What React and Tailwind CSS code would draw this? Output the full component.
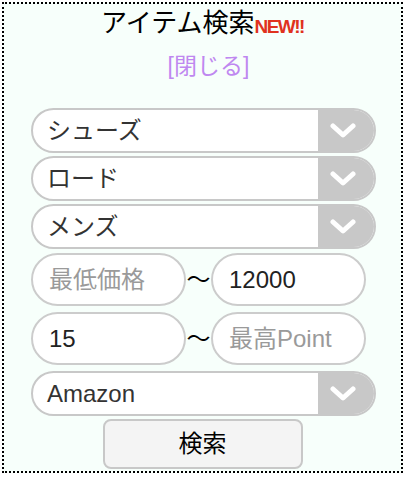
import React from "react";

const font = { fontFamily: '"Liberation Sans", "Noto Sans CJK JP", sans-serif' };

function Chevron() {
  return (
    <svg width="26" height="18" viewBox="0 0 26 18">
      <path d="M3 4 L13 13 L23 4" fill="none" stroke="#ffffff" strokeWidth="5" strokeLinecap="round" strokeLinejoin="round" />
    </svg>
  );
}

function Select({ label }) {
  return (
    <div className="flex h-[45px] w-[345px] overflow-hidden rounded-full border-2 border-[#c8c8c8] bg-white">
      <div className="flex flex-1 items-center pl-[14px] text-[24px] text-[#333]">{label}</div>
      <div className="flex w-[56px] items-center justify-center bg-[#c8c8c8] pr-[6px]">
        <Chevron />
      </div>
    </div>
  );
}

function Input({ value, placeholder }) {
  return (
    <div className="flex h-[53px] w-[155px] items-center rounded-full border-2 border-[#cccccc] bg-white pl-[16px] text-[24px]">
      {value ? (
        <span className="text-[#222]">{value}</span>
      ) : (
        <span className="text-[#9a9a9a]">{placeholder}</span>
      )}
    </div>
  );
}

export default function App() {
  return (
    <div style={font} className="p-[2px]">
      <div className="flex h-[471px] w-[401px] flex-col items-center border-2 border-dotted border-black bg-[#f7fffb]">
        <div className="mt-[2px] flex items-end leading-[34px]">
          <span className="text-[26px] text-black">アイテム検索</span>
          <span className="mb-[4px] text-[19px] font-bold leading-[19px] tracking-[-1.5px] text-[#e0321e]">NEW!!</span>
        </div>
        <div className="ml-[12px] mt-[12px] text-[23px] leading-[28px] text-[#bf88f0]">[閉じる]</div>
        <div className="mt-[28px] flex flex-col items-start gap-[3px] self-start pl-[27px]">
          <Select label="シューズ" />
          <Select label="ロード" />
          <Select label="メンズ" />
          <div className="mt-[1px] flex items-center">
            <Input placeholder="最低価格" />
            <span className="w-[25px] text-center text-[24px] text-black">～</span>
            <Input value="12000" />
          </div>
          <div className="mt-[3px] flex items-center">
            <Input value="15" />
            <span className="w-[25px] text-center text-[24px] text-black">～</span>
            <Input placeholder="最高Point" />
          </div>
          <div className="mt-[3px]">
            <Select label="Amazon" />
          </div>
        </div>
        <button className="mt-[3px] flex h-[50px] w-[200px] items-center justify-center rounded-[8px] border-2 border-[#c8c8c8] bg-[#f4f4f4] text-[24px] text-black">
          検索
        </button>
      </div>
    </div>
  );
}
